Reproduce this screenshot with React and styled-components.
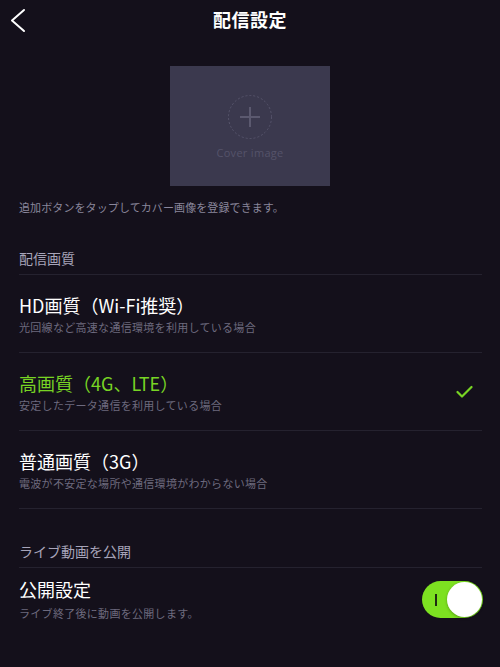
import React, { useState } from 'react';
import styled, { createGlobalStyle } from 'styled-components';

const GlobalStyle = createGlobalStyle`
  html, body {
    margin: 0;
    padding: 0;
    background: #14101b;
  }
  body {
    font-family: "Noto Sans CJK JP", "Noto Sans", sans-serif;
    -webkit-font-smoothing: antialiased;
  }
`;

const Page = styled.div`
  width: 500px;
  min-height: 667px;
  background: #14101b;
  color: #fff;
`;

const Header = styled.header`
  height: 38px;
  display: grid;
  grid-template-columns: 44px 1fr 44px;
  align-items: center;
`;

const BackButton = styled.button`
  background: none;
  border: 0;
  padding: 0;
  margin: 0;
  height: 38px;
  display: flex;
  align-items: center;
  cursor: pointer;
`;

const Title = styled.h1`
  margin: 0;
  text-align: center;
  font-size: 18px;
  font-weight: 700;
  line-height: 24px;
  color: #fff;
  letter-spacing: 0.5px;
`;

const CoverWrap = styled.div`
  display: flex;
  justify-content: center;
  margin-top: 28px;
`;

const CoverBox = styled.div`
  width: 160px;
  height: 120px;
  background: #3b394e;
  display: flex;
  flex-direction: column;
  align-items: center;
  padding-top: 29px;
  box-sizing: border-box;
`;

const CoverLabel = styled.span`
  margin-top: 7px;
  font-family: "Open Sans", "Noto Sans", sans-serif;
  font-size: 11px;
  line-height: 14px;
  color: #55536a;
  letter-spacing: 0.3px;
`;

const Content = styled.div`
  padding: 0 18px 0 19px;
`;

const Helper = styled.p`
  margin: 13px 0 0;
  font-size: 11px;
  line-height: 16px;
  color: #8a879c;
  letter-spacing: 0.1px;
`;

const SectionHead = styled.div`
  margin-top: ${p => p.$top}px;
  padding-bottom: 6px;
  border-bottom: 1px solid #25222f;
  font-size: 14px;
  line-height: 20px;
  color: #a7a4b9;
`;

const Row = styled.div`
  display: flex;
  align-items: center;
  justify-content: space-between;
  padding: ${p => (p.$compact ? '9px 0 12px' : '18px 0 17px')};
  border-bottom: ${p => (p.$last ? 'none' : '1px solid #25222f')};
`;

const RowText = styled.div`
  display: flex;
  flex-direction: column;
  gap: ${p => (p.$gap || 2)}px;
`;

const RowTitle = styled.span`
  font-size: 18px;
  line-height: 24px;
  color: ${p => (p.$active ? '#78d424' : '#ffffff')};
`;

const RowSub = styled.span`
  font-size: 11px;
  line-height: 16px;
  color: #6d6a7e;
  letter-spacing: 0.3px;
`;

const Check = styled.svg`
  margin-right: 9px;
`;

const Toggle = styled.button`
  width: 61px;
  height: 37px;
  border-radius: 19px;
  border: 0;
  padding: 0 1px;
  background: ${p => (p.$on ? '#7de121' : '#3b394e')};
  display: flex;
  align-items: center;
  justify-content: ${p => (p.$on ? 'flex-end' : 'flex-start')};
  position: relative;
  cursor: pointer;
  margin-right: -1px;
`;

const ToggleMark = styled.span`
  position: absolute;
  left: 13px;
  top: 13px;
  width: 1.5px;
  height: 12px;
  background: #1f2a12;
`;

const Knob = styled.span`
  width: 35px;
  height: 35px;
  border-radius: 50%;
  background: #fff;
  box-shadow: 0 1px 3px rgba(0, 0, 0, 0.3);
`;

const qualities = [
  { title: 'HD画質（Wi-Fi推奨）', sub: '光回線など高速な通信環境を利用している場合' },
  { title: '高画質（4G、LTE）', sub: '安定したデータ通信を利用している場合' },
  { title: '普通画質（3G）', sub: '電波が不安定な場所や通信環境がわからない場合' },
];

export default function App() {
  const [selected, setSelected] = useState(1);
  const [publish, setPublish] = useState(true);

  return (
    <Page>
      <GlobalStyle />
      <Header>
        <BackButton aria-label="back">
          <svg width="30" height="38" viewBox="0 0 30 38">
            <polyline points="24,10 12,20.5 24,31" fill="none" stroke="#fff" strokeWidth="2" strokeLinecap="round" strokeLinejoin="round" />
          </svg>
        </BackButton>
        <Title>配信設定</Title>
        <span />
      </Header>

      <CoverWrap>
        <CoverBox>
          <svg width="44" height="44" viewBox="0 0 44 44">
            <circle cx="22" cy="22" r="21.5" fill="none" stroke="#56546b" strokeWidth="1" strokeDasharray="2 2" />
            <line x1="12" y1="22" x2="32" y2="22" stroke="#5b596f" strokeWidth="2" />
            <line x1="22" y1="12" x2="22" y2="32" stroke="#5b596f" strokeWidth="2" />
          </svg>
          <CoverLabel>Cover image</CoverLabel>
        </CoverBox>
      </CoverWrap>

      <Content>
        <Helper>追加ボタンをタップしてカバー画像を登録できます。</Helper>

        <SectionHead $top={33}>配信画質</SectionHead>
        {qualities.map((q, i) => (
          <Row key={q.title} onClick={() => setSelected(i)}>
            <RowText>
              <RowTitle $active={selected === i}>{q.title}</RowTitle>
              <RowSub>{q.sub}</RowSub>
            </RowText>
            {selected === i && (
              <Check width="17" height="14" viewBox="0 0 17 14">
                <polyline points="1.5,7 6,11.5 15.5,2" fill="none" stroke="#78d424" strokeWidth="2.2" strokeLinecap="round" strokeLinejoin="round" />
              </Check>
            )}
          </Row>
        ))}

        <SectionHead $top={32}>ライブ動画を公開</SectionHead>
        <Row $compact $last>
          <RowText $gap={4}>
            <RowTitle>公開設定</RowTitle>
            <RowSub>ライブ終了後に動画を公開します。</RowSub>
          </RowText>
          <Toggle $on={publish} onClick={() => setPublish(!publish)} aria-label="toggle">
            {publish && <ToggleMark />}
            <Knob />
          </Toggle>
        </Row>
      </Content>
    </Page>
  );
}
